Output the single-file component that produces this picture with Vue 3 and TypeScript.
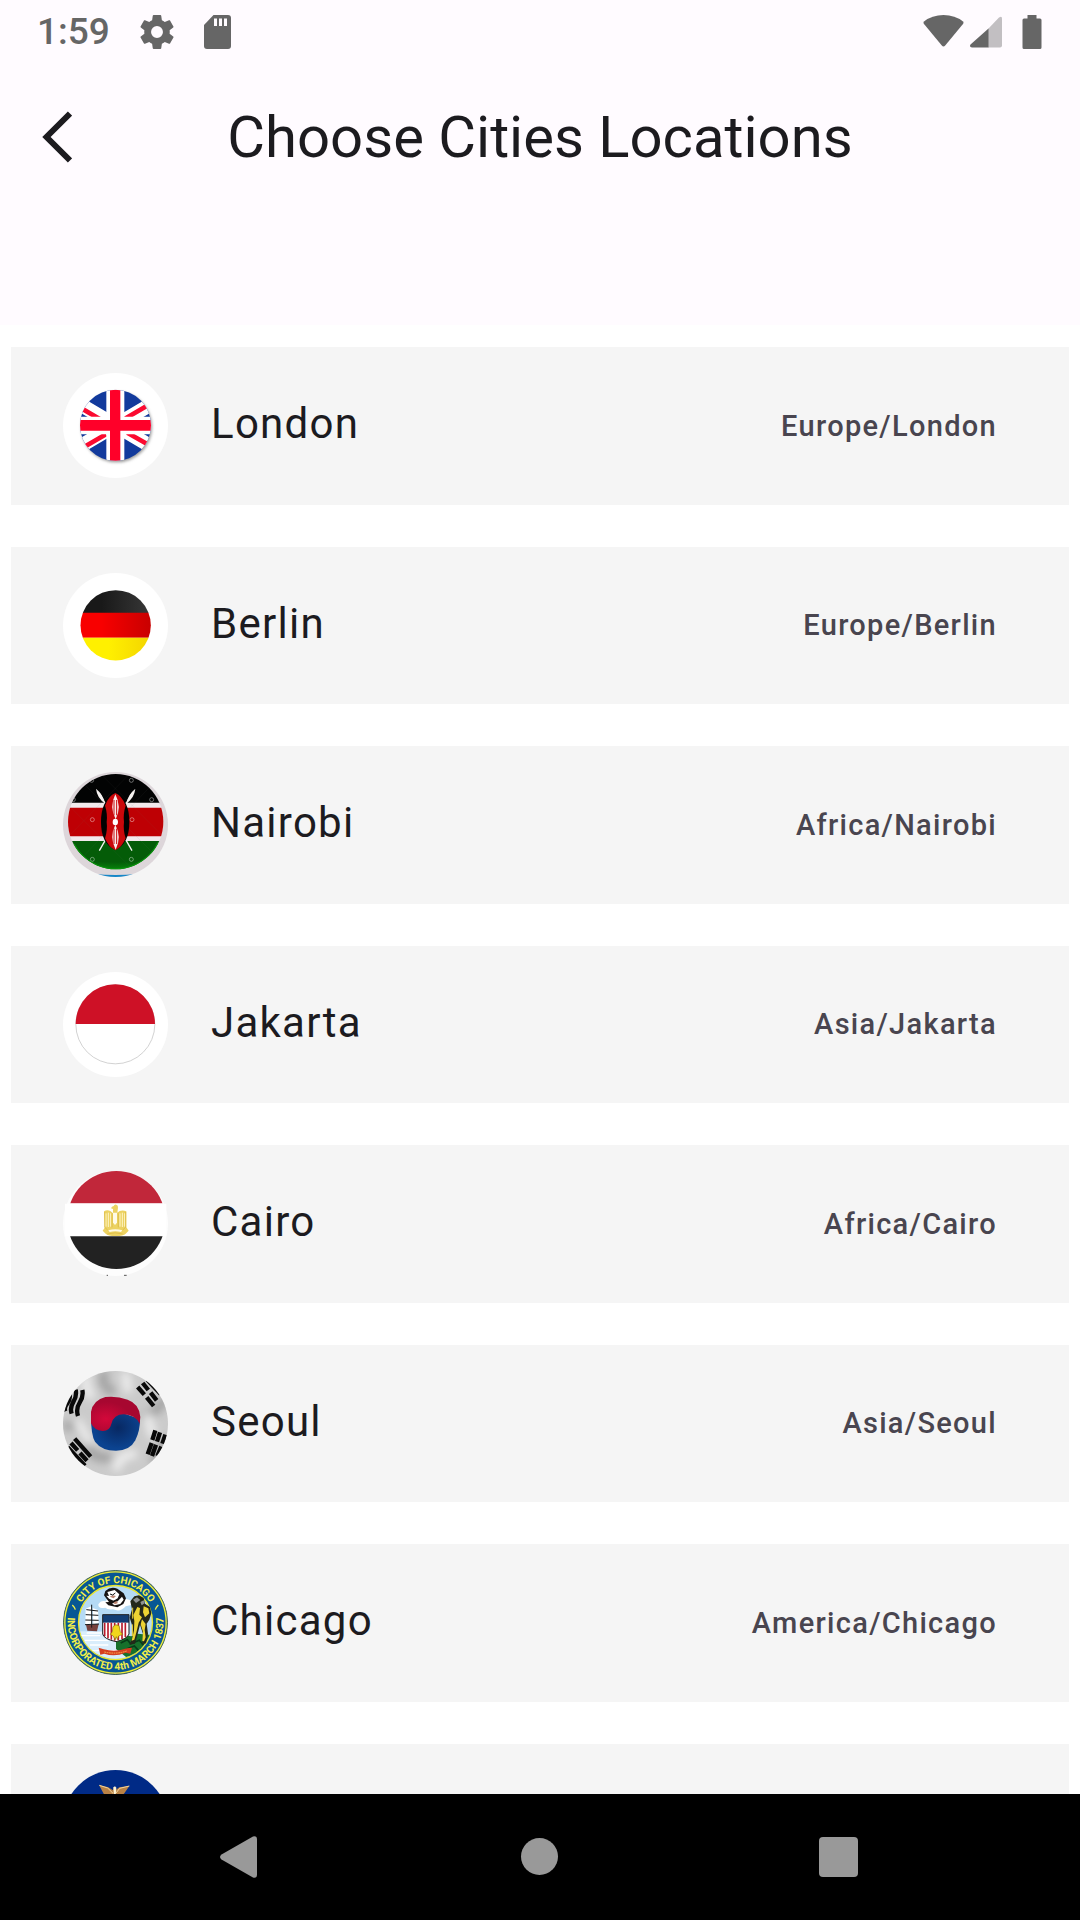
<script setup lang="ts">
interface City {
  flag: string
  name?: string
  zone?: string
}

const cities: City[] = [
  { flag: 'uk', name: 'London', zone: 'Europe/London' },
  { flag: 'germany', name: 'Berlin', zone: 'Europe/Berlin' },
  { flag: 'kenya', name: 'Nairobi', zone: 'Africa/Nairobi' },
  { flag: 'indonesia', name: 'Jakarta', zone: 'Asia/Jakarta' },
  { flag: 'egypt', name: 'Cairo', zone: 'Africa/Cairo' },
  { flag: 'korea', name: 'Seoul', zone: 'Asia/Seoul' },
  { flag: 'chicago', name: 'Chicago', zone: 'America/Chicago' },
  { flag: 'eagle' },
]
</script>

<template>
  <div class="screen">
    <header class="top">
      <div class="status">
        <div class="status-group left">
          <span class="clock">1:59</span>
          <svg width="34" height="34" viewBox="2 2 20 20" aria-hidden="true">
            <path fill="#666" d="M19.43 12.98c.04-.32.07-.64.07-.98s-.03-.66-.07-.98l2.11-1.65c.19-.15.24-.42.12-.64l-2-3.46c-.12-.22-.39-.3-.61-.22l-2.49 1c-.52-.4-1.08-.73-1.69-.98l-.38-2.65A.49.49 0 0 0 14 2h-4c-.25 0-.46.18-.49.42l-.38 2.65c-.61.25-1.17.59-1.69.98l-2.49-1c-.23-.09-.49 0-.61.22l-2 3.46c-.13.22-.07.49.12.64l2.11 1.65c-.04.32-.07.65-.07.98s.03.66.07.98l-2.11 1.65c-.19.15-.24.42-.12.64l2 3.46c.12.22.39.3.61.22l2.49-1c.52.4 1.08.73 1.69.98l.38 2.65c.03.24.24.42.49.42h4c.25 0 .46-.18.49-.42l.38-2.65c.61-.25 1.17-.59 1.69-.98l2.49 1c.23.09.49 0 .61-.22l2-3.46c.12-.22.07-.49-.12-.64zM12 15.5a3.5 3.5 0 1 1 0-7 3.5 3.5 0 0 1 0 7z" />
          </svg>
          <svg width="27" height="34" viewBox="0 0 27 34" aria-hidden="true">
            <path fill="#666" d="M9.500 0H24a3 3 0 0 1 3 3v28a3 3 0 0 1-3 3H3a3 3 0 0 1-3-3V10z" />
            <path fill="#fffbff" d="M10 3.500h3V11h-3zM15 3.500h3V11h-3zM20 3.500h3V11h-3z" />
          </svg>
        </div>
        <div class="status-group right">
          <svg width="41" height="34" viewBox="0 0 41 34" aria-hidden="true">
            <path fill="#666" d="M1 6.500Q9 0 20.500 0T40 6.500q1 1 .2 2.200L22.200 30.500q-1.700 2-3.400 0L.8 8.700Q0 7.500 1 6.500z" />
          </svg>
          <svg class="signal" width="32" height="34" viewBox="0 0 32 34" aria-hidden="true">
            <path fill="#c2bfc2" d="M18 14 29 2.500q3-2 3 1v27q0 2-2 2H18z" />
            <path fill="#666" d="M18.500 13.500v19H2q-3-.5-1.500-3z" />
          </svg>
          <svg width="20" height="34" viewBox="0 0 20 34" aria-hidden="true">
            <path fill="#666" d="M5.500 0h9v3.500H18q1.500 0 1.500 1.500v27.500Q19.500 34 18 34H2q-1.500 0-1.500-1.500V5Q.5 3.500 2 3.500h3.500z" />
          </svg>
        </div>
      </div>
      <div class="toolbar">
        <button class="back" type="button" aria-label="Back">
          <svg width="30" height="52" viewBox="0 0 30 52" aria-hidden="true">
            <path fill="none" stroke="#1c1b1f" stroke-width="6" d="M28 2.500 4.500 26 28 49.500" />
          </svg>
        </button>
        <h1>Choose Cities Locations</h1>
      </div>
    </header>

    <ul class="list">
      <li v-for="city in cities" :key="city.flag">
        <button class="tile" type="button">
          <svg v-if="city.flag === 'uk'" class="flag" viewBox="189 130 315 315" aria-hidden="true">
            <defs>
              <clipPath id="uk-disc"><circle cx="346.500" cy="287" r="106.500" /></clipPath>
              <filter id="soft" x="-20%" y="-20%" width="140%" height="140%"><feGaussianBlur stdDeviation="4" /></filter>
            </defs>
            <circle cx="346.500" cy="287.500" r="157.500" fill="#fff" />
            <circle cx="350" cy="292" r="106" fill="#999" filter="url(#soft)" />
            <g clip-path="url(#uk-disc)">
              <path fill="#123a9c" d="M240 180h214v214H240z" />
              <path stroke="#fff" stroke-width="42" d="m206 204 281 166M206 370 487 204" />
              <path stroke="#fb0a30" stroke-width="14" d="m232 229 76 44M440 229l-78 46M256 350l62-36M382 309l66 38" />
              <path fill="#fff" d="M319 180h54v214h-54zM240 261h214v53H240z" />
              <path fill="#ff0029" d="M330 180h31v214h-31zM240 271h214v32H240z" />
            </g>
          </svg>

          <svg v-else-if="city.flag === 'germany'" class="flag" viewBox="39 37 315 315" aria-hidden="true">
            <defs>
              <clipPath id="de-disc"><circle cx="197" cy="194" r="105.500" /></clipPath>
              <linearGradient id="de-black"><stop offset=".3" stop-color="#191919" /><stop offset="1" stop-color="#383838" /></linearGradient>
              <linearGradient id="de-red"><stop offset=".3" stop-color="#f80000" /><stop offset="1" stop-color="#c80000" /></linearGradient>
              <linearGradient id="de-gold"><stop offset=".4" stop-color="#fff000" /><stop offset="1" stop-color="#f3d400" /></linearGradient>
            </defs>
            <circle cx="196.500" cy="194.500" r="157.500" fill="#fff" />
            <g clip-path="url(#de-disc)">
              <path fill="url(#de-black)" d="M90 88h214v70H90z" />
              <path fill="url(#de-red)" d="M90 156h214v75H90z" />
              <path fill="url(#de-gold)" d="M90 231h214v70H90z" />
            </g>
          </svg>

          <svg v-else-if="city.flag === 'kenya'" class="flag" viewBox="39 36 315 315" aria-hidden="true">
            <defs>
              <clipPath id="ke-edge"><circle cx="196.500" cy="193.500" r="157.500" /></clipPath>
              <clipPath id="ke-disc"><circle cx="197" cy="185" r="143" /></clipPath>
              <radialGradient id="ke-green" cx=".5" cy="0" r="1"><stop offset=".7" stop-color="#045c08" /><stop offset="1" stop-color="#078c0b" /></radialGradient>
            </defs>
            <circle cx="196.500" cy="193.500" r="157.500" fill="#ddd6da" />
            <path clip-path="url(#ke-edge)" fill="#1687c8" d="M130 342q66 6 134 0v12H130z" />
            <g clip-path="url(#ke-disc)">
              <path fill="#020303" d="M50 40h294v90H50z" />
              <path fill="#f2e9ec" d="M50 128h294v116H50z" />
              <path fill="#be0004" d="M50 143h294v86H50z" />
              <path fill="url(#ke-green)" d="M50 243h294v90H50z" />
              <path stroke="#777" stroke-opacity=".25" d="m70 40 250 250M150 40l190 190M50 130l190 190M320 60 80 310M240 40 55 230" />
              <g fill="none" stroke="#fff" stroke-opacity=".4" stroke-width="3">
                <circle cx="125" cy="61" r="6" /><circle cx="244" cy="61" r="6" /><circle cx="305" cy="119" r="6" />
                <circle cx="70" cy="119" r="6" /><circle cx="127" cy="179" r="6" /><circle cx="246" cy="179" r="6" />
                <circle cx="127" cy="298" r="6" /><circle cx="244" cy="298" r="6" />
              </g>
              <circle cx="197" cy="185" r="142" fill="none" stroke="#0a940d" stroke-width="4" stroke-dasharray="310 600" stroke-dashoffset="-65" />
            </g>
            <path stroke="#f5f2f0" stroke-width="4" d="m148 100 98 172M246 100l-98 172" />
            <path fill="#f5f2f0" d="M138 86q22 18 27 44-24-16-27-44zM256 86q-22 18-27 44 24-16 27-44z" />
            <path fill="#020202" d="M196 100q42 20 42 86t-42 84q-43-18-43-84t43-86z" />
            <path fill="#ca080b" d="M196 99q20 8 31 38-8 24-5 49-3 25 5 49-11 27-31 36-20-9-31-36 8-24 5-49 3-25-5-49 11-30 31-38z" />
            <path fill="#f9eeee" d="M196 103q20 37 1 75-20-38-1-75zM196 194q20 37 1 75-20-38-1-75z" />
            <path stroke="#ca080b" stroke-width="3" d="M192 120v46M200 120v46M192 206v46M200 206v46" />
            <ellipse cx="196" cy="186" rx="8" ry="10" fill="#fff" />
          </svg>

          <svg v-else-if="city.flag === 'indonesia'" class="flag" viewBox="39 34 315 315" aria-hidden="true">
            <circle cx="196.500" cy="191.500" r="157.500" fill="#fff" />
            <circle cx="196" cy="191" r="118.500" fill="#fff" stroke="#bbb" stroke-width="2" />
            <path fill="#ce1126" d="M77 190a119 119 0 0 1 238 0z" />
          </svg>

          <svg v-else-if="city.flag === 'egypt'" class="flag" viewBox="39 33 315 315" aria-hidden="true">
            <defs>
              <clipPath id="eg-disc"><circle cx="199" cy="180" r="147" /></clipPath>
            </defs>
            <circle cx="196.500" cy="190.500" r="157.500" fill="#fdfdfd" />
            <g clip-path="url(#eg-disc)">
              <path fill="#c1273a" d="M40 30h310v100H40z" />
              <path fill="#222" d="M40 229h310v100H40z" />
            </g>
            <path fill="#fff" d="M45 131h304v97H45z" />
            <path stroke="#555" stroke-width="3" d="M170 346h4M222 346h8" />
            <path fill="#ecd262" d="M162 154q10-6 20 0l7 6v-13l-6-2 3-5 5-2q2-6 8-4 6 2 5 9l-2 15 7-5q9-4 20 1v48l7 10-9 9q-6 7-30 7t-30-7l-9-9 6-9z" />
            <path fill="#fffbe8" d="M189 158h12v30l-6 7-6-7zM175 211q21-7 42 0l-4 5q-17-4-34 0z" />
            <g fill="none" stroke="#fff5c8" stroke-width="3">
              <path d="M168 160v40M175 158v43M182 160v40M224 160v40M217 158v43M210 160v40" />
            </g>
            <path fill="none" stroke="#d9b53c" stroke-width="2" d="M164 156v46l9 8M227 156v46l-9 8M186 160v42M205 160v42M172 222q24-7 46 0" />
          </svg>

          <svg v-else-if="city.flag === 'korea'" class="flag" viewBox="39 31 315 315" aria-hidden="true">
            <defs>
              <clipPath id="kr-edge"><circle cx="196.500" cy="188.500" r="157.500" /></clipPath>
              <filter id="kr-cloth" x="-30%" y="-30%" width="160%" height="160%"><feGaussianBlur stdDeviation="13" /></filter>
              <radialGradient id="kr-red" cx=".3" cy=".65"><stop offset="0" stop-color="#d3083a" /><stop offset="1" stop-color="#a70730" /></radialGradient>
              <radialGradient id="kr-blue" cx=".55" cy=".45"><stop offset="0" stop-color="#082862" /><stop offset="1" stop-color="#0b4390" /></radialGradient>
            </defs>
            <g clip-path="url(#kr-edge)">
              <path fill="#cbcbcb" d="M39 30h316v317H39z" />
              <g fill="none" filter="url(#kr-cloth)" stroke-width="24">
                <path stroke="#9c9c9c" d="M165 30q-20 50 30 65M40 200q50-20 65 40t80 50M345 110q-20 50-75 60M350 230l-40 80" />
                <path stroke="#f0f0f0" d="M110 40q-10 50 20 70M225 35l10 60M80 180l40 70M200 330q0-50 60-50M290 160l20 70" />
              </g>
              <path fill="url(#kr-blue)" d="M123 165q0-10 60-20l87 30q1 32-14 64-16 31-58 31-43 0-63-27-12-20-12-78z" />
              <path fill="url(#kr-red)" d="M123 188v-34q5-35 43-45 35-4 67 8 35 12 38 52l-2 20q-14-27-48-28-30 0-37 29-5 22-27 21-24-2-34-23z" />
              <g fill="none" stroke="#090909" stroke-width="13">
                <path d="M58 97q5 18-6 31t-6 24M77 87q4 20-7 37t-5 35M97 88q4 20-8 38t-5 40" />
                <path d="m292 57 40 43M278 67l17 21m7 8 18 23M263 79l20 23m7 8 21 26" />
                <path d="m74 234 48 54M63 247l20 22m7 8 21 23M53 260l52 55" />
                <path d="m316 209-9 29m-2 9-12 34M330 215l-9 28m-3 9-12 34M346 222l-9 27m-3 9-12 28" />
              </g>
            </g>
          </svg>

          <svg v-else-if="city.flag === 'chicago'" class="flag" viewBox="39 30 315 315" aria-hidden="true">
            <defs>
              <path id="seal-top" d="M78 187.500a118.500 118.500 0 0 1 237 0" />
              <path id="seal-bottom" d="M60 140a144 144 0 1 0 273 0" />
              <clipPath id="seal-disc"><circle cx="196.500" cy="187.500" r="109" /></clipPath>
            </defs>
            <circle cx="196.500" cy="187.500" r="156" fill="#075794" stroke="#47664e" stroke-width="3" />
            <circle cx="196.500" cy="187.500" r="152" fill="none" stroke="#f2ee35" stroke-width="4" />
            <circle cx="196.500" cy="187.500" r="111" fill="#b5daf5" stroke="#e9e52f" stroke-width="4" />
            <g clip-path="url(#seal-disc)">
              <path fill="#d9edfb" d="M85 214h150v90H85z" />
              <path stroke="#fff" stroke-width="4" d="M92 227h58M105 241h70M120 255h55M126 272h90M110 219h45" />
              <path fill="#17702b" d="m198 246 24-20 22 3 18-8 45 4v70h-74l-35-28z" />
              <path stroke="#073c17" stroke-width="5" fill="none" d="m212 249 20-10 10 12 26-10 12 15M228 268l25-10 12 13" />
            </g>
            <path fill="#fff" d="M145 133q8-14 23-9 4-18 24-15l36 8q22 4 19 17l-20 5q-15 19-38 9-17 2-23-5-22 5-21-10z" />
            <path fill="#161313" d="M166 93q16-15 36-7l19 14 7 15-8 17-18 10-27-6-9-9 11-1-9-12-6-8z" />
            <path fill="#fff" d="m172 96 22-6 14 13-5 12-12 7-14-6-8-9 8 1zM203 124l13-14 5 9-10 13-17 4-8-5z" />
            <path fill="#bb8572" d="m179 110 9-4 10 2-7 7zM190 128l9-5 5 6-9 4z" />
            <path fill="none" stroke="#111" stroke-width="3" d="m180 102 8 3 8-6M188 125l17-7" />
            <path fill="#77413d" d="m108 194 38-2-5 22-29-2z" />
            <path fill="#fff" d="m107 146 17-7 3 56-21-1zM128 144l16 6 2 40-16 3z" />
            <path fill="none" stroke="#151719" stroke-width="3" d="M125 134v69M109 149l35 4M107 164l38 2M106 180l40 1M105 194l42-2" />
            <path fill="#fff" d="M159 165h77v57q-5 15-38 23-36-8-39-23z" />
            <path fill="#123e75" d="M158 164h79v24h-79z" />
            <path stroke="#b91c2d" stroke-width="5" d="M164 188v41M174 188v47M184 188v51M194 188v54M205 188v53M216 188v49M226 188v43" />
            <path fill="#f2d61c" stroke="#8a6b10" stroke-width="2" d="M189 200q8-10 18-3l4 18 7 8-12 5-4 11-3-9-4 9-5-11-9-5 6-8z" />
            <path fill="none" stroke="#222" stroke-width="3" d="M158 164h79v58q-5 15-39 23-37-8-40-23z" />
            <path fill="#23281a" d="m241 124 12-15 14-3 14 8 4 17 15 10 4 18-6 20-8 12 4 30-6 29-11 2 2-30-9-28-8 32-7 25-17 3 9-19 1-34-9-28 7-25z" />
            <path fill="#ecd333" d="m262 141 8 3-2 20 8 8-10 16-6 26-7 25-8 3 7-31 1-28-3-18zM281 139l14 6 3 15-13 12-6-15zM276 178l11 14-3 18 3 22-5 12-5-1 2-28-7-22z" />
            <path fill="#8d9190" d="m249 119 12-7 10 8-13 9zM271 126l10-5 3 9-9 6z" />
            <path fill="none" stroke="#ecd333" stroke-width="3" d="M248 143v33M247 193v35" />
            <path fill="#d43e20" d="m146 263 15 5q36 10 70-3l15-2-5 18-14-3q-33 14-64 3l-12 3z" />
            <path stroke="#ffac50" stroke-width="3" stroke-dasharray="5 2" d="m163 276q36 8 67-3" fill="none" />
            <g fill="#f3ef48" font-family="Roboto, sans-serif" font-weight="700">
              <text font-size="30" text-anchor="middle"><textPath href="#seal-top" startOffset="50%">CITY OF CHICAGO</textPath></text>
              <text font-size="31" text-anchor="middle"><textPath href="#seal-bottom" startOffset="50%">INCORPORATED 4th MARCH 1837</textPath></text>
            </g>
            <path fill="none" stroke="#f3ef48" stroke-width="4" d="M67 135q7 7 9 14M325 135q-7 7-9 14" />
          </svg>

          <svg v-else class="flag" viewBox="189 117 315 315" aria-hidden="true">
            <circle cx="346.500" cy="274.500" r="157.500" fill="#002a86" />
            <path fill="#b98245" d="m297 162 28 7 14 9 3-11 4 11 12-9 30-4-16 23-16 9-10 17-14-1-9-16-12-9z" />
            <path fill="none" stroke="#f3d6a0" stroke-width="3" d="m298 163 25 8 16 16M388 165l-29 7-11 14" />
            <path fill="#fff4d4" d="m340 169 5-3 4 4-2 23-5 3z" />
          </svg>

          <span v-if="city.name" class="name">{{ city.name }}</span>
          <span v-if="city.zone" class="zone">{{ city.zone }}</span>
        </button>
      </li>
    </ul>

    <nav class="system-nav" aria-label="System">
      <button type="button" aria-label="Back">
        <svg width="42" height="42" viewBox="0 0 42 42" aria-hidden="true">
          <path fill="#999" d="M2.500 18.500 34 .5q4-1 4 3v35q0 4-4 3l-31.500-18q-3-2.500 0-5z" />
        </svg>
      </button>
      <button type="button" aria-label="Home">
        <svg width="42" height="42" viewBox="0 0 42 42" aria-hidden="true">
          <circle cx="20.500" cy="20.500" r="18.500" fill="#999" />
        </svg>
      </button>
      <button type="button" aria-label="Recent apps">
        <svg width="42" height="42" viewBox="1 0 42 42" aria-hidden="true">
          <rect x="1" y="1" width="39" height="40" rx="4" fill="#999" />
        </svg>
      </button>
    </nav>
  </div>
</template>

<style>
body {
  margin: 0;
  background: #fff;
}
</style>

<style scoped>
.screen {
  display: flex;
  flex-direction: column;
  height: 100vh;
  overflow: hidden;
  color: #1c1b1f;
  font-family: Roboto, sans-serif;
}

button {
  margin: 0;
  padding: 0;
  border: 0;
  background: none;
  color: inherit;
  font: inherit;
}

svg {
  display: block;
  flex: none;
}

.top {
  flex: none;
  padding-bottom: 115px;
  background: #fffbff;
}

.status {
  display: flex;
  justify-content: space-between;
  height: 63px;
  padding: 0 38px 0 37px;
}

.status-group {
  display: flex;
  align-items: center;
}

.left {
  gap: 30px;
}

.clock {
  color: #666;
  font-size: 37px;
  font-weight: 500;
  line-height: 42px;
}

.signal {
  margin: 0 20px 0 6px;
}

.toolbar {
  display: grid;
  grid-template-columns: 1fr auto 1fr;
  align-items: center;
  height: 147px;
  padding: 0 42px;
}

.back {
  justify-self: start;
}

h1 {
  margin: 0;
  font-size: 58px;
  font-weight: 400;
  line-height: 74px;
}

.list {
  display: flex;
  flex: 1;
  flex-direction: column;
  gap: 42px;
  min-height: 0;
  margin: 0;
  padding: 22px 11px 0;
  overflow: hidden;
  background: #fff;
  list-style: none;
}

.tile {
  display: flex;
  align-items: center;
  gap: 43px;
  width: 100%;
  min-height: 3.75em;
  padding: 0 72px 0 52px;
  background: #f5f5f5;
  font-size: 42px;
  text-align: left;
}

.flag {
  width: 105px;
  height: 105px;
}

.name {
  flex: 1;
  padding-bottom: 3px;
  letter-spacing: 0.03em;
  line-height: 60px;
}

.zone {
  color: #49454f;
  font-size: 29px;
  font-weight: 500;
  letter-spacing: 0.045em;
  line-height: 42px;
}

.system-nav {
  display: flex;
  flex: none;
  align-items: center;
  justify-content: center;
  gap: 180px;
  height: 126px;
  background: #000;
}

.system-nav button {
  display: flex;
  justify-content: center;
  width: 120px;
}
</style>
